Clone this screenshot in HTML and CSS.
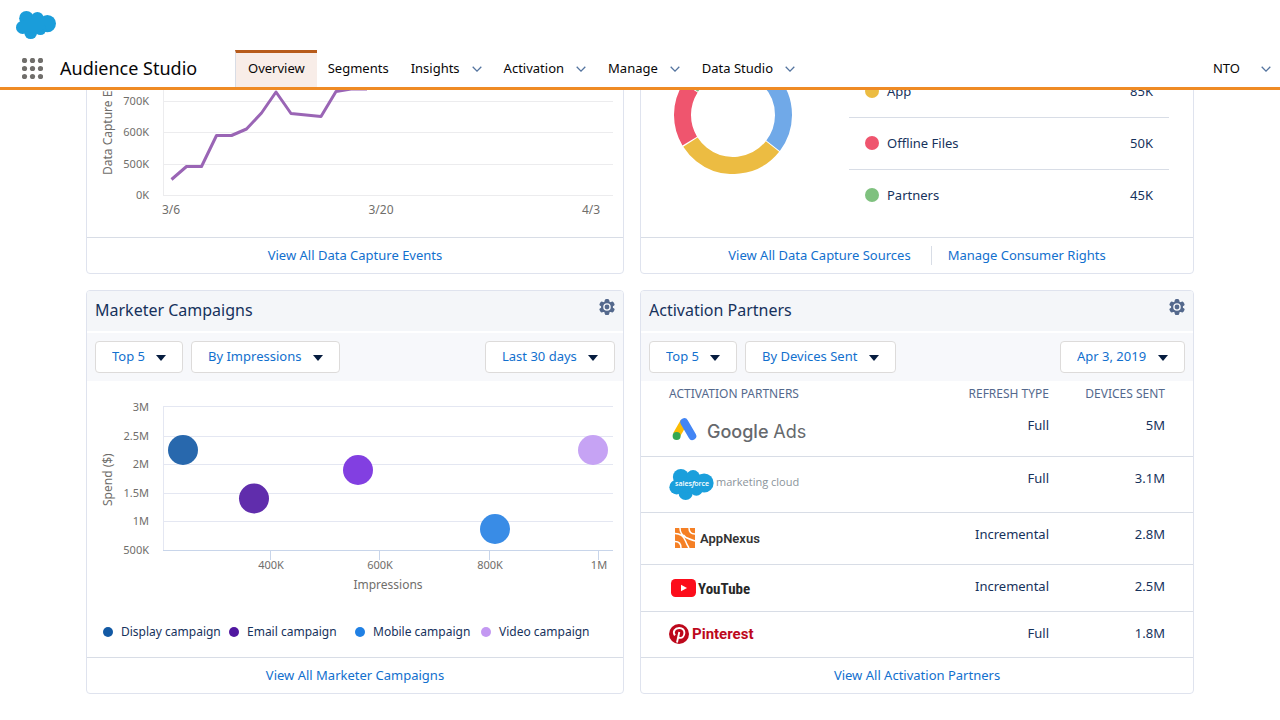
FILE: index.html
```html
<!DOCTYPE html>
<html lang="en">
<head>
<meta charset="utf-8">
<meta name="viewport" content="width=device-width, initial-scale=1">
<title>Audience Studio</title>
<link rel="stylesheet" href="styles.css">
</head>
<body>
<svg class="sprite" width="0" height="0" aria-hidden="true">
  <symbol id="cloud" viewBox="0 0 40 28">
    <circle cx="10.4" cy="7.2" r="7.2"/><circle cx="21.4" cy="7.3" r="6.3"/><circle cx="31.4" cy="12.6" r="8.6"/>
    <circle cx="6.6" cy="16.4" r="6.6"/><circle cx="14.7" cy="21.6" r="6.4"/><circle cx="24.4" cy="18.3" r="5.8"/>
    <path d="M8 8h20v10l-8 4-12-2z"/>
  </symbol>
  <symbol id="chevron" viewBox="0 0 10 6"><path d="M.7.8 5 5.1 9.3.8" fill="none" stroke="#54749f" stroke-width="1.3"/></symbol>
  <symbol id="gear" viewBox="0 0 16 16">
    <g fill="#54698d"><rect x="5.700" y="0" width="4.600" height="16" rx="1.500"/><rect x="5.700" y="0" width="4.600" height="16" rx="1.500" transform="rotate(60 8 8)"/><rect x="5.700" y="0" width="4.600" height="16" rx="1.500" transform="rotate(120 8 8)"/><circle cx="8" cy="8" r="6"/></g>
    <circle cx="8" cy="8" r="3.1" fill="#54698d" stroke="#f4f6f9" stroke-width="1.400"/>
  </symbol>
</svg>

<header class="top">
  <div class="brand"><svg class="brand-logo" role="img" aria-label="Salesforce"><use href="#cloud"/></svg></div>
  <div class="bar">
    <button class="waffle" aria-label="App launcher">
      <svg width="21" height="21" viewBox="0 0 21 21" fill="#706e6b"><circle cx="2.5" cy="2.5" r="2.6"/><circle cx="10.5" cy="2.5" r="2.6"/><circle cx="18.5" cy="2.5" r="2.6"/><circle cx="2.5" cy="10.5" r="2.6"/><circle cx="10.5" cy="10.5" r="2.6"/><circle cx="18.5" cy="10.5" r="2.6"/><circle cx="2.5" cy="18.5" r="2.6"/><circle cx="10.5" cy="18.5" r="2.6"/><circle cx="18.5" cy="18.5" r="2.6"/></svg>
    </button>
    <h1 class="app-name">Audience Studio</h1>
    <nav class="tabs">
      <a class="tab tab-active" href="#" aria-current="page">Overview</a>
      <a class="tab" href="#">Segments</a>
      <button class="tab">Insights<svg class="chevron"><use href="#chevron"/></svg></button>
      <button class="tab">Activation<svg class="chevron"><use href="#chevron"/></svg></button>
      <button class="tab">Manage<svg class="chevron"><use href="#chevron"/></svg></button>
      <button class="tab">Data Studio<svg class="chevron"><use href="#chevron"/></svg></button>
    </nav>
    <button class="account">NTO<svg class="chevron"><use href="#chevron"/></svg></button>
  </div>
</header>

<main class="board">
  <section class="card" aria-label="Data Capture Events">
    <svg class="chart" viewBox="0 0 536 206" role="img" aria-label="Data capture events by day">
      <path class="grid" d="M76 70.5H526M76 101.5H526M76 133.5H526M76 164.5H526M76.500 0V164"/>
      <g class="ticks ticks-end"><text x="62" y="74">700K</text><text x="62" y="105">600K</text><text x="62" y="137">500K</text><text x="62" y="168">0K</text></g>
      <g class="ticks ticks-mid ticks-date"><text x="84" y="183">3/6</text><text x="294" y="183">3/20</text><text x="504" y="183">4/3</text></g>
      <text class="axis" transform="translate(25 144) rotate(-90)">Data Capture Events</text>
      <polyline class="trend" points="84.500,148.500 99.500,135.500 114.500,135.500 129.500,104.500 144.500,104.500 159.500,98 174.500,82 189,61 204,82.500 234,85.500 249,60.500 264,58 280,58"/>
    </svg>
    <footer class="card-foot"><a href="#">View All Data Capture Events</a></footer>
  </section>

  <section class="card" aria-label="Data Capture Sources">
    <div class="sources">
      <svg class="donut" viewBox="0 0 118 118" role="img" aria-label="Share by source">
        <g fill="none" stroke-width="17">
          <circle cx="59" cy="59" r="50.500" stroke="#70a9e8" pathLength="360" stroke-dasharray="127 233" transform="rotate(-89.500 59 59)"/>
          <circle cx="59" cy="59" r="50.500" stroke="#ecbc42" pathLength="360" stroke-dasharray="109 251" transform="rotate(38.500 59 59)"/>
          <circle cx="59" cy="59" r="50.500" stroke="#ef556e" pathLength="360" stroke-dasharray="63.500 296.500" transform="rotate(149 59 59)"/>
          <circle cx="59" cy="59" r="50.500" stroke="#7fc17f" pathLength="360" stroke-dasharray="56 304" transform="rotate(213.500 59 59)"/>
        </g>
      </svg>
      <ul class="source-list">
        <li><i class="dot dot-app"></i>App<b>85K</b></li>
        <li><i class="dot dot-offline"></i>Offline Files<b>50K</b></li>
        <li><i class="dot dot-partners"></i>Partners<b>45K</b></li>
      </ul>
    </div>
    <footer class="card-foot"><a href="#">View All Data Capture Sources</a><a class="split" href="#">Manage Consumer Rights</a></footer>
  </section>

  <section class="card">
    <header class="card-head"><h2>Marketer Campaigns</h2><button class="gear" aria-label="Marketer Campaigns settings"><svg width="16" height="16"><use href="#gear"/></svg></button></header>
    <div class="tools">
      <label class="picker"><select aria-label="Campaign count"><option>Top 5</option></select></label>
      <label class="picker"><select aria-label="Campaign order"><option>By Impressions</option></select></label>
      <label class="picker picker-end"><select aria-label="Campaign period"><option>Last 30 days</option></select></label>
    </div>
    <svg class="chart" viewBox="0 0 536 241" role="img" aria-label="Spend against impressions">
      <path class="grid grid-blue" d="M76 25.500H526M76 55.500H526M76 83.500H526M76 112.500H526M76 140.500H526M76.500 25V169"/>
      <path class="base" d="M76 169.500H526M183.500 169V179M292.500 169V179M402.500 169V179M511.500 169V179"/>
      <g class="ticks ticks-end"><text x="62" y="30">3M</text><text x="62" y="59">2.5M</text><text x="62" y="87">2M</text><text x="62" y="116">1.5M</text><text x="62" y="144">1M</text><text x="62" y="173">500K</text></g>
      <g class="ticks ticks-mid"><text x="184" y="188">400K</text><text x="293" y="188">600K</text><text x="403" y="188">800K</text><text x="512" y="188">1M</text></g>
      <text class="axis axis-mid" x="301" y="208">Impressions</text>
      <text class="axis" transform="translate(25 125) rotate(-90)">Spend ($)</text>
      <circle cx="96" cy="69" r="15" fill="#2868ad"/>
      <circle cx="167" cy="117.500" r="15" fill="#602dac"/>
      <circle cx="271" cy="89" r="15" fill="#823fe1"/>
      <circle cx="408" cy="148" r="15" fill="#398ce6"/>
      <circle cx="506" cy="69" r="15" fill="#c6a3f4"/>
    </svg>
    <ul class="legend">
      <li><i class="key key-display"></i>Display campaign</li>
      <li><i class="key key-email"></i>Email campaign</li>
      <li><i class="key key-mobile"></i>Mobile campaign</li>
      <li><i class="key key-video"></i>Video campaign</li>
    </ul>
    <footer class="card-foot"><a href="#">View All Marketer Campaigns</a></footer>
  </section>

  <section class="card">
    <header class="card-head"><h2>Activation Partners</h2><button class="gear" aria-label="Activation Partners settings"><svg width="16" height="16"><use href="#gear"/></svg></button></header>
    <div class="tools">
      <label class="picker"><select aria-label="Partner count"><option>Top 5</option></select></label>
      <label class="picker"><select aria-label="Partner order"><option>By Devices Sent</option></select></label>
      <label class="picker picker-end"><select aria-label="Partner date"><option>Apr 3, 2019</option></select></label>
    </div>
    <table class="partners">
      <thead><tr><th>ACTIVATION PARTNERS</th><th class="type">REFRESH TYPE</th><th class="sent">DEVICES SENT</th></tr></thead>
      <tbody>
        <tr class="row-m">
          <td><svg class="logo" width="144" height="32" viewBox="0 0 144 32">
            <path d="M15 8 7.500 21" stroke="#fbbc04" stroke-width="7.600"/>
            <path d="M15.300 8.300 23.300 22" stroke="#4285f4" stroke-width="8" stroke-linecap="round"/>
            <circle cx="7.600" cy="22" r="4" fill="#34a853"/>
            <text class="lg-google" x="38" y="24">Google <tspan class="lg-ads">Ads</tspan></text></svg></td>
          <td class="type">Full</td><td class="sent">5M</td>
        </tr>
        <tr class="row-l">
          <td><svg class="logo" width="144" height="32" viewBox="0 0 144 32">
            <use href="#cloud" y="1" width="45" height="31" fill="#1a9fdc"/>
            <text class="lg-sf" x="6" y="18">sales<tspan class="lg-slant">f</tspan>orce</text>
            <text class="lg-mc" x="47" y="18">marketing cloud</text></svg></td>
          <td class="type">Full</td><td class="sent">3.1M</td>
        </tr>
        <tr class="row-m">
          <td><svg class="logo" width="144" height="20" viewBox="0 0 144 20">
            <rect x="6" width="20" height="20" fill="#f58025"/>
            <g fill="none" stroke="#fff" stroke-width="1.500"><path d="M6 5.500C12 5.500 15 9 16.500 13S20 20 20 20M11 0c0 5 3 8 6 9.500S26 13 26 13M6 13.500c4 0 6 2.500 6 6.500M20 0c0 4 2 6 6 6M17 9.500 14.500 7"/></g>
            <text class="lg-appnexus" x="31" y="15">AppNexus</text></svg></td>
          <td class="type">Incremental</td><td class="sent">2.8M</td>
        </tr>
        <tr class="row-s">
          <td><svg class="logo" width="144" height="20" viewBox="0 0 144 20">
            <rect x="2" y="1" width="25" height="18" rx="4.500" fill="#fc0d1b"/><path d="m12 6.700 6 3.300-6 3.300z" fill="#fff"/>
            <text class="lg-youtube" x="29" y="16">YouTube</text></svg></td>
          <td class="type">Incremental</td><td class="sent">2.5M</td>
        </tr>
        <tr class="row-xs">
          <td><svg class="logo" width="144" height="20" viewBox="0 0 144 20">
            <circle cx="10" cy="10" r="10" fill="#bd081c"/>
            <path d="M8 18.500 10.300 8M5.900 11.400C3.300 7.500 6 4 10.200 4c3.600 0 5.400 2.300 5.200 5-.2 3-2 5-4.200 4.900-1.300 0-2-.8-2.200-1.500" fill="none" stroke="#fff" stroke-width="1.900"/>
            <text class="lg-pinterest" x="23" y="15">Pinterest</text></svg></td>
          <td class="type">Full</td><td class="sent">1.8M</td>
        </tr>
      </tbody>
    </table>
    <footer class="card-foot"><a href="#">View All Activation Partners</a></footer>
  </section>
</main>
</body>
</html>
```
FILE: styles.css
```css
* { box-sizing: border-box; }
body { margin: 0; background: #fff; color: #16325c; font: 13px/20px "Noto Sans", sans-serif; }
button { margin: 0; padding: 0; border: 0; background: none; color: inherit; font: inherit; cursor: pointer; }
a { color: #1270ce; text-decoration: none; }
ul { margin: 0; padding: 0; list-style: none; }
.sprite { position: absolute; }

.top { position: sticky; top: 0; z-index: 1; background: #fff; border-bottom: 3px solid #ef8b24; color: #080707; }
.brand { height: 50px; padding: 11px 16px; }
.brand-logo { display: block; width: 40px; height: 28px; fill: #1a9dda; }
.bar { display: flex; align-items: stretch; height: 37px; }
.waffle { display: flex; align-items: center; padding: 0 17px 0 22px; }
.app-name { width: 175px; margin: 0; font-size: 18px; font-weight: 400; line-height: 37px; white-space: nowrap; }
.tabs { display: flex; }
.tab { display: flex; align-items: center; padding: 0 11px 2px; color: #080707; white-space: nowrap; }
.tab-active { padding: 0 12px 4px; border-top: 3px solid #b75b1b; border-left: 1px solid #d8dde6; background: #f8ede8; }
.chevron { width: 10px; height: 6px; margin: 2px 0 0 12px; }
.account { display: flex; align-items: center; margin-left: auto; padding: 0 9px 2px 0; }
.account .chevron { margin-left: 21px; }

.board { display: grid; grid-template-columns: minmax(0, 538fr) minmax(0, 554fr); gap: 16px; margin-top: -60px; padding: 0 86px 26px; }
.card { display: flex; flex-direction: column; border: 1px solid #dfe3ee; border-radius: 4px; overflow: hidden; }
.card-head { display: flex; justify-content: space-between; align-items: flex-start; padding: 8px; background: #f4f6f9; border-bottom: 2px solid #fff; }
.card-head h2 { margin: 0 0 2px; font-size: 16px; font-weight: 400; line-height: 22px; }
.gear { height: 16px; }
.gear svg { display: block; }
.card-foot { display: flex; justify-content: center; margin-top: auto; padding: 8px 0; border-top: 1px solid #d8dde6; }
.card-foot a { line-height: 19px; }
.card-foot .split { margin-left: 20px; padding-left: 16px; border-left: 1px solid #d8dde6; }

.tools { display: flex; gap: 8px; padding: 8px; background: #f7f8fb; }
.picker { position: relative; }
.picker select { display: block; height: 32px; margin: 0; padding: 0 37px 2px 16px; border: 1px solid #dddbda; border-radius: 4px; background: #fff; color: #1270ce; font: inherit; appearance: none; }
.picker::after { content: ""; position: absolute; top: 14px; right: 17px; width: 10px; height: 6px; background: #061c3f; clip-path: polygon(0 0, 100% 0, 50% 100%); pointer-events: none; }
.picker-end { margin-left: auto; }

.chart { display: block; width: 100%; height: auto; font-family: "Noto Sans", sans-serif; }
.grid { fill: none; stroke: #ececee; }
.grid-blue { stroke: #e4e7f2; }
.base { fill: none; stroke: #c8d5ea; }
.ticks { fill: #706e6b; font-size: 11px; }
.ticks-end { text-anchor: end; }
.ticks-mid { text-anchor: middle; }
.ticks-date { font-size: 12px; }
.axis { fill: #706e6b; font-size: 12px; }
.axis-mid { text-anchor: middle; }
.trend { fill: none; stroke: #9a65b5; stroke-width: 3; stroke-linejoin: round; }

.sources { display: flex; flex: 1; align-items: flex-end; justify-content: space-between; padding: 0 24px 15px 33px; }
.donut { width: 118px; height: 118px; margin-bottom: 48px; }
.source-list { width: 320px; }
.source-list li { display: flex; align-items: center; height: 52px; padding: 0 16px 2px; border-bottom: 1px solid #d8dde6; }
.source-list li:last-child { border-bottom: 0; }
.source-list b { margin-left: auto; font-weight: 400; }
.dot { width: 14px; height: 14px; margin-right: 8px; border-radius: 50%; }
.dot-app { background: #ecbc42; }
.dot-offline { background: #ef556e; }
.dot-partners { background: #7fc17f; }

.legend { display: grid; grid-template-columns: repeat(4, 126px); padding: 0 0 15px 16px; font-size: 12px; line-height: 20px; white-space: nowrap; }
.legend li { display: flex; align-items: center; }
.key { width: 10px; height: 10px; margin-right: 8px; border-radius: 50%; }
.key-display { background: #1259a4; }
.key-email { background: #5017a0; }
.key-mobile { background: #2080e4; }
.key-video { background: #c398f2; }

.partners { width: 100%; border-collapse: collapse; }
.partners th { height: 23px; padding: 3px 0 0 28px; color: #54698d; font-size: 12px; font-weight: 400; text-align: left; }
.partners td { padding: 0 0 0 28px; vertical-align: middle; }
.partners tbody tr { border-bottom: 1px solid #d8dde6; }
.partners tbody tr:last-child { border-bottom: 0; }
.partners .type, .partners .sent { text-align: right; }
.partners td.type, .partners td.sent { padding-top: 11px; vertical-align: top; }
.partners .sent { width: 144px; padding-right: 28px; }
.row-m { height: 52px; }
.row-l { height: 56px; }
.row-s { height: 47px; }
.row-xs { height: 45px; }
.logo { display: block; }
.lg-google { fill: #66696d; font: 500 18px Inter, sans-serif; }
.lg-ads { font-weight: 400; }
.lg-sf { fill: #fff; font: 600 7px "Open Sans", sans-serif; }
.lg-slant { font-style: italic; }
.lg-mc { fill: #8b949b; font: 11px "Open Sans", sans-serif; }
.lg-appnexus { fill: #333; font: 600 13px Roboto, sans-serif; }
.lg-youtube { fill: #282828; font: bold 15px "Roboto Condensed", Roboto, sans-serif; }
.lg-pinterest { fill: #bd081c; font: bold 15px Roboto, sans-serif; }
```
